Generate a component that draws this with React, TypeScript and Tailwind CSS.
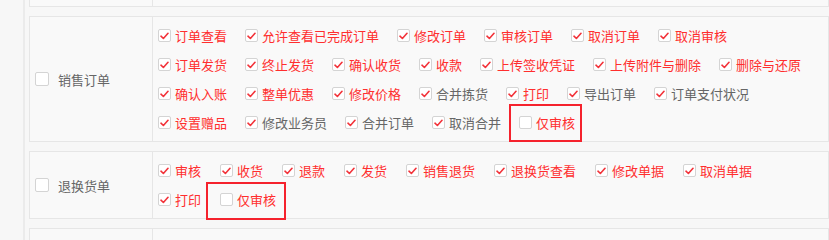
import React from "react";

type Item = { t: string; c: boolean; red: boolean; box?: "a" | "b" };

const Check = ({ checked, size = 13 }: { checked: boolean; size?: number }) => (
  <span
    className="inline-flex items-center justify-center shrink-0 bg-white border border-[#d4d4d4] rounded-[2px]"
    style={{ width: size, height: size }}
  >
    {checked && (
      <svg width="9" height="8" viewBox="0 0 9 8" fill="none">
        <path d="M1 4.2 L3.4 6.5 L8 1.3" stroke="#f2333a" strokeWidth="1.6" strokeLinecap="round" strokeLinejoin="round" />
      </svg>
    )}
  </span>
);

const Entry = ({ it }: { it: Item }) => (
  <div className="relative flex items-center h-[29px]">
    <Check checked={it.c} />
    <span className={`ml-[4px] text-[13px] leading-none whitespace-nowrap ${it.red ? "text-[#ff2e2e]" : "text-[#666666]"}`}>
      {it.t}
    </span>
    {it.box === "a" && (
      <span className="absolute left-[-10px] right-[-7px] top-[-4px] bottom-[-5px] border-2 border-[#f5222d] pointer-events-none" />
    )}
    {it.box === "b" && (
      <span className="absolute left-[-14px] right-[-10px] top-[-3px] bottom-[-6px] border-2 border-[#f5222d] pointer-events-none" />
    )}
  </div>
);

const r = (t: string, extra: Partial<Item> = {}): Item => ({ t, c: true, red: true, ...extra });
const g = (t: string): Item => ({ t, c: true, red: false });

const sales: Item[][] = [
  [r("订单查看"), r("允许查看已完成订单"), r("修改订单"), r("审核订单"), r("取消订单"), r("取消审核")],
  [r("订单发货"), r("终止发货"), r("确认收货"), r("收款"), r("上传签收凭证"), r("上传附件与删除"), r("删除与还原")],
  [r("确认入账"), r("整单优惠"), r("修改价格"), g("合并拣货"), r("打印"), g("导出订单"), g("订单支付状况")],
  [r("设置赠品"), g("修改业务员"), g("合并订单"), g("取消合并"), r("仅审核", { c: false, box: "a" })],
];

const returns: Item[][] = [
  [r("审核"), r("收货"), r("退款"), r("发货"), r("销售退货"), r("退换货查看"), r("修改单据"), r("取消单据")],
  [r("打印"), r("仅审核", { c: false, box: "b" })],
];

const Section = ({ label, rows, gap }: { label: string; rows: Item[][]; gap: string }) => (
  <div className="flex border border-[#e6e6e6] bg-[#f9f9f9]">
    <div className="w-[123px] shrink-0 border-r border-[#e6e6e6] flex items-center pl-[5px]">
      <Check checked={false} size={14} />
      <span className="ml-[9px] text-[13px] text-[#666666] leading-none">{label}</span>
    </div>
    <div className="flex-1 pl-[5px] pt-[4px] pb-[4px] flex flex-col">
      {rows.map((row, i) => (
        <div key={i} className={`flex ${gap}`}>
          {row.map((it, j) => (
            <Entry key={j} it={it} />
          ))}
        </div>
      ))}
    </div>
  </div>
);

export default function App() {
  return (
    <div
      className="w-[829px] h-[240px] overflow-hidden bg-[#f7f7f7] flex"
      style={{ fontFamily: '"Noto Sans CJK SC", "Noto Sans", sans-serif' }}
    >
      <div className="w-[25px] shrink-0 border-r-2 border-[#ebebeb]" />
      <div className="flex-1 pl-[4px] flex flex-col gap-[9px] mt-[-1px]">
        <div className="flex h-[8px] border border-t-0 border-[#e6e6e6] bg-[#f9f9f9] shrink-0">
          <div className="w-[123px] border-r border-[#e6e6e6]" />
        </div>
        <Section label="销售订单" rows={sales} gap="gap-x-[18px]" />
        <Section label="退换货单" rows={returns} gap="gap-x-[19px]" />
        <div className="flex h-[30px] border border-b-0 border-[#e6e6e6] bg-[#f9f9f9] shrink-0">
          <div className="w-[123px] border-r border-[#e6e6e6]" />
        </div>
      </div>
    </div>
  );
}
